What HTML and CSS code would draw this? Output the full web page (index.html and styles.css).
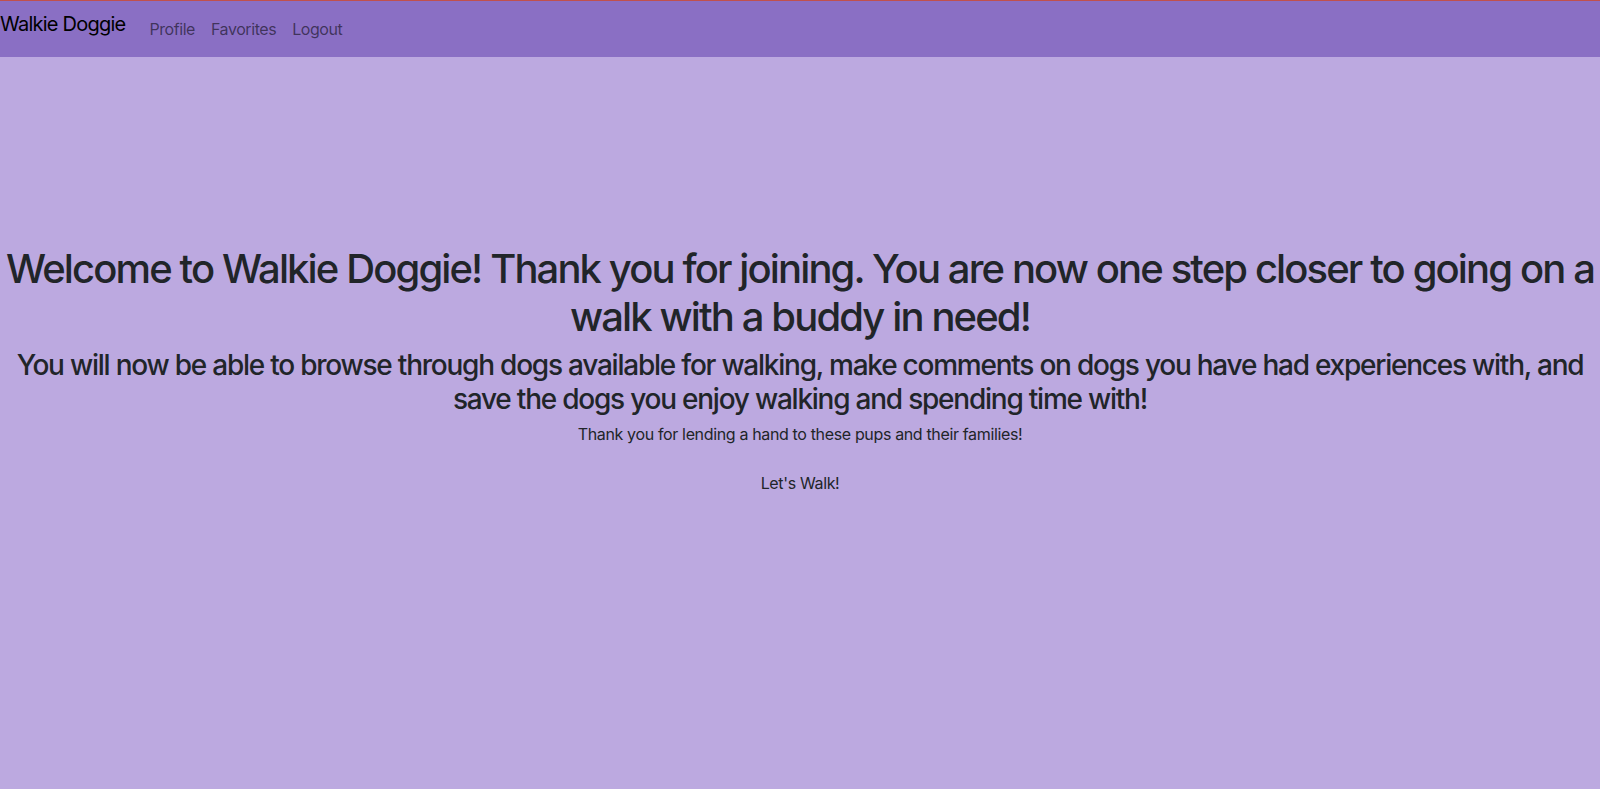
FILE: index.html
```html
<!DOCTYPE html>
<html lang="en">
<head>
<meta charset="utf-8">
<title>Walkie Doggie</title>
<link rel="stylesheet" href="styles.css">
</head>
<body>
<nav class="navbar">
  <a class="brand" href="#">Walkie Doggie</a>
  <ul class="nav">
    <li><a class="nav-link" href="#">Profile</a></li>
    <li><a class="nav-link" href="#">Favorites</a></li>
    <li><a class="nav-link" href="#">Logout</a></li>
  </ul>
</nav>
<main class="welcome">
  <h1>Welcome to Walkie Doggie! Thank you for joining. You are now one step closer to going on a walk with a buddy in need!</h1>
  <h3>You will now be able to browse through dogs available for walking, make comments on dogs you have had experiences with, and save the dogs you enjoy walking and spending time with!</h3>
  <p class="thanks">Thank you for lending a hand to these pups and their families!</p>
  <p class="cta">Let's Walk!</p>
</main>
</body>
</html>
```
FILE: styles.css
```css
* { box-sizing: border-box; }
html, body { margin: 0; padding: 0; }
body {
  background: #bca9e0;
  font-family: Inter, "Noto Sans", sans-serif;
  color: #212529;
  font-size: 16px;
  line-height: 1.5;
  min-height: 789px;
}
.navbar {
  display: flex;
  align-items: center;
  background: #8a6fc4;
  border-top: 1px solid #c0504d;
  height: 57px;
  padding: 0;
}
.brand {
  font-size: 20px;
  letter-spacing: -0.038em;
  color: #000;
  text-decoration: none;
  margin-right: 16px;
  margin-top: -10px;
  line-height: 30px;
}
.nav {
  display: flex;
  list-style: none;
  margin: 0;
  padding: 0;
}
.nav-link {
  display: block;
  padding: 8px 8px;
  color: rgba(0,0,0,.55);
  text-decoration: none;
  font-size: 16px;
  letter-spacing: -0.027em;
}
.welcome {
  text-align: center;
  padding-top: 188px;
}
h1 {
  font-size: 40px;
  font-weight: 500;
  line-height: 1.2;
  letter-spacing: -0.047em;
  margin: 0 0 8px;
}
h3 {
  font-size: 28px;
  font-weight: 500;
  line-height: 1.2;
  letter-spacing: -0.044em;
  margin: 0 0 6px;
}
p {
  margin: 0;
  letter-spacing: -0.022em;
}
.cta {
  margin-top: 25px;
}
```
